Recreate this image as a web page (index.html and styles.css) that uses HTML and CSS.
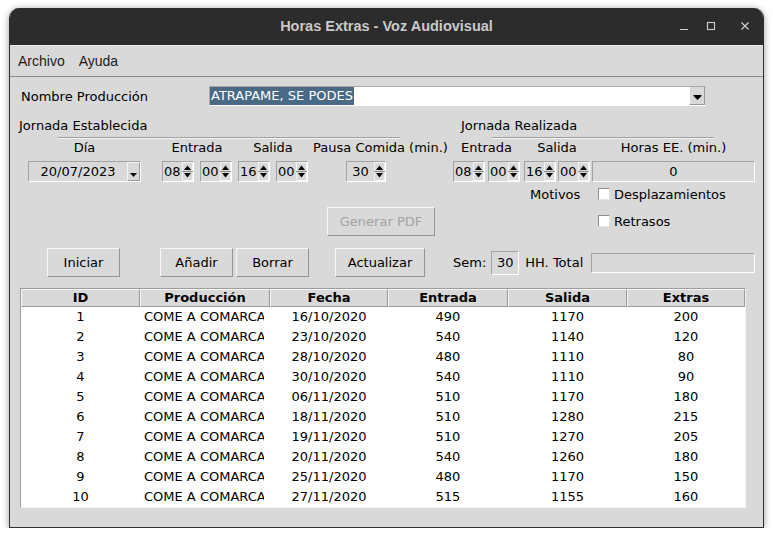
FILE: index.html
```html
<!DOCTYPE html>
<html lang="es">
<head>
<meta charset="utf-8">
<title>Horas Extras - Voz Audiovisual</title>
<link rel="stylesheet" href="styles.css">
</head>
<body>
<div class="window">
  <div class="titlebar">
    <div></div>
    <div class="title">Horas Extras - Voz Audiovisual</div>
    <div class="controls">
      <svg class="ctl ctl-min" width="10" height="10" viewBox="0 0 10 10"><path d="M1 8.5h8" stroke="#cfcfcf" stroke-width="1.2"/></svg>
      <svg class="ctl ctl-max" width="10" height="10" viewBox="0 0 10 10"><rect x="1.5" y="1.5" width="7" height="7" fill="none" stroke="#cfcfcf" stroke-width="1.1"/></svg>
      <svg class="ctl ctl-close" width="10" height="10" viewBox="0 0 10 10"><path d="M1.5 1.5l7 7M8.5 1.5l-7 7" stroke="#cfcfcf" stroke-width="1.2"/></svg>
    </div>
  </div>
  <div class="menubar"><span class="menu-item">Archivo</span><span class="menu-item">Ayuda</span></div>
  <div class="content">
    <div class="row-name">
      <span class="lbl-name">Nombre Producción</span>
      <div class="combo">
        <span class="combo-val"><span class="sel">ATRAPAME, SE PODES</span></span>
        <span class="combo-btn"><svg width="9" height="6" viewBox="0 0 9 6"><path d="M0.5 1h8L4.5 5z" fill="#000"/><path d="M0.5 0.5h8" stroke="#000"/></svg></span>
      </div>
    </div>

    <div class="row-sections">
      <div class="section sec-left"><div class="sec-title">Jornada Establecida</div><div class="sep sep-left"></div></div>
      <div class="section sec-right"><div class="sec-title">Jornada Realizada</div><div class="sep sep-right"></div></div>
    </div>

    <div class="row-fields labels">
      <div class="c c-dia">Día</div>
      <div class="c c-ent">Entrada</div>
      <div class="c c-sal">Salida</div>
      <div class="c c-pau">Pausa Comida (min.)</div>
      <div class="c c-ent2">Entrada</div>
      <div class="c c-sal2">Salida</div>
      <div class="c c-hor">Horas EE. (min.)</div>
    </div>

    <div class="row-fields inputs">
      <div class="c c-dia">
        <div class="date"><span class="date-val">20/07/2023</span><span class="date-btn"><svg width="7" height="4" viewBox="0 0 7 4"><path d="M0 0h7L3.5 4z" fill="#000"/></svg></span></div>
      </div>
      <div class="c c-ent pair">
        <div class="spin"><span class="spin-val">08</span><span class="spin-btns"><svg width="11" height="19" viewBox="0 0 11 19"><path d="M0.5 0.5h10v18h-10z" fill="none" stroke="#f4f4f4"/><path d="M2 8h7L5.5 3.5z" fill="#000"/><path d="M0 9.5h11" stroke="#8a8a8a"/><path d="M2 11h7l-3.5 4.5z" fill="#000"/></svg></span></div>
        <div class="spin"><span class="spin-val">00</span><span class="spin-btns"><svg width="11" height="19" viewBox="0 0 11 19"><path d="M0.5 0.5h10v18h-10z" fill="none" stroke="#f4f4f4"/><path d="M2 8h7L5.5 3.5z" fill="#000"/><path d="M0 9.5h11" stroke="#8a8a8a"/><path d="M2 11h7l-3.5 4.5z" fill="#000"/></svg></span></div>
      </div>
      <div class="c c-sal pair">
        <div class="spin"><span class="spin-val">16</span><span class="spin-btns"><svg width="11" height="19" viewBox="0 0 11 19"><path d="M0.5 0.5h10v18h-10z" fill="none" stroke="#f4f4f4"/><path d="M2 8h7L5.5 3.5z" fill="#000"/><path d="M0 9.5h11" stroke="#8a8a8a"/><path d="M2 11h7l-3.5 4.5z" fill="#000"/></svg></span></div>
        <div class="spin"><span class="spin-val">00</span><span class="spin-btns"><svg width="11" height="19" viewBox="0 0 11 19"><path d="M0.5 0.5h10v18h-10z" fill="none" stroke="#f4f4f4"/><path d="M2 8h7L5.5 3.5z" fill="#000"/><path d="M0 9.5h11" stroke="#8a8a8a"/><path d="M2 11h7l-3.5 4.5z" fill="#000"/></svg></span></div>
      </div>
      <div class="c c-pau">
        <div class="spin spin-wide"><span class="spin-val center">30</span><span class="spin-btns"><svg width="11" height="19" viewBox="0 0 11 19"><path d="M0.5 0.5h10v18h-10z" fill="none" stroke="#f4f4f4"/><path d="M2 8h7L5.5 3.5z" fill="#000"/><path d="M0 9.5h11" stroke="#8a8a8a"/><path d="M2 11h7l-3.5 4.5z" fill="#000"/></svg></span></div>
      </div>
      <div class="c c-ent2 pair">
        <div class="spin"><span class="spin-val">08</span><span class="spin-btns"><svg width="11" height="19" viewBox="0 0 11 19"><path d="M0.5 0.5h10v18h-10z" fill="none" stroke="#f4f4f4"/><path d="M2 8h7L5.5 3.5z" fill="#000"/><path d="M0 9.5h11" stroke="#8a8a8a"/><path d="M2 11h7l-3.5 4.5z" fill="#000"/></svg></span></div>
        <div class="spin"><span class="spin-val">00</span><span class="spin-btns"><svg width="11" height="19" viewBox="0 0 11 19"><path d="M0.5 0.5h10v18h-10z" fill="none" stroke="#f4f4f4"/><path d="M2 8h7L5.5 3.5z" fill="#000"/><path d="M0 9.5h11" stroke="#8a8a8a"/><path d="M2 11h7l-3.5 4.5z" fill="#000"/></svg></span></div>
      </div>
      <div class="c c-sal2 pair">
        <div class="spin"><span class="spin-val">16</span><span class="spin-btns"><svg width="11" height="19" viewBox="0 0 11 19"><path d="M0.5 0.5h10v18h-10z" fill="none" stroke="#f4f4f4"/><path d="M2 8h7L5.5 3.5z" fill="#000"/><path d="M0 9.5h11" stroke="#8a8a8a"/><path d="M2 11h7l-3.5 4.5z" fill="#000"/></svg></span></div>
        <div class="spin"><span class="spin-val">00</span><span class="spin-btns"><svg width="11" height="19" viewBox="0 0 11 19"><path d="M0.5 0.5h10v18h-10z" fill="none" stroke="#f4f4f4"/><path d="M2 8h7L5.5 3.5z" fill="#000"/><path d="M0 9.5h11" stroke="#8a8a8a"/><path d="M2 11h7l-3.5 4.5z" fill="#000"/></svg></span></div>
      </div>
      <div class="c c-hor"><div class="entry entry-hor">0</div></div>
    </div>

    <div class="row-mid">
      <button class="btn btn-pdf" disabled>Generar PDF</button>
      <div class="motivos">
        <span class="mot-lbl">Motivos</span>
        <label class="chk"><span class="box"></span>Desplazamientos</label>
        <span></span>
        <label class="chk"><span class="box"></span>Retrasos</label>
      </div>
    </div>

    <div class="row-buttons">
      <button class="btn btn-iniciar">Iniciar</button>
      <button class="btn btn-anadir">Añadir</button>
      <button class="btn btn-borrar">Borrar</button>
      <button class="btn btn-actualizar">Actualizar</button>
      <span class="sem-lbl">Sem:</span>
      <span class="sem-box">30</span>
      <span class="hh-lbl">HH. Total</span>
      <span class="entry hh-entry"></span>
    </div>

    <div class="table">
      <div class="thead">
        <div class="th">ID</div><div class="th">Producción</div><div class="th">Fecha</div><div class="th">Entrada</div><div class="th">Salida</div><div class="th">Extras</div>
      </div>
      <div class="tr"><div class="td">1</div><div class="td prod"><div class="clip">COME A COMARCA</div></div><div class="td">16/10/2020</div><div class="td">490</div><div class="td">1170</div><div class="td">200</div></div>
      <div class="tr"><div class="td">2</div><div class="td prod"><div class="clip">COME A COMARCA</div></div><div class="td">23/10/2020</div><div class="td">540</div><div class="td">1140</div><div class="td">120</div></div>
      <div class="tr"><div class="td">3</div><div class="td prod"><div class="clip">COME A COMARCA</div></div><div class="td">28/10/2020</div><div class="td">480</div><div class="td">1110</div><div class="td">80</div></div>
      <div class="tr"><div class="td">4</div><div class="td prod"><div class="clip">COME A COMARCA</div></div><div class="td">30/10/2020</div><div class="td">540</div><div class="td">1110</div><div class="td">90</div></div>
      <div class="tr"><div class="td">5</div><div class="td prod"><div class="clip">COME A COMARCA</div></div><div class="td">06/11/2020</div><div class="td">510</div><div class="td">1170</div><div class="td">180</div></div>
      <div class="tr"><div class="td">6</div><div class="td prod"><div class="clip">COME A COMARCA</div></div><div class="td">18/11/2020</div><div class="td">510</div><div class="td">1280</div><div class="td">215</div></div>
      <div class="tr"><div class="td">7</div><div class="td prod"><div class="clip">COME A COMARCA</div></div><div class="td">19/11/2020</div><div class="td">510</div><div class="td">1270</div><div class="td">205</div></div>
      <div class="tr"><div class="td">8</div><div class="td prod"><div class="clip">COME A COMARCA</div></div><div class="td">20/11/2020</div><div class="td">540</div><div class="td">1260</div><div class="td">180</div></div>
      <div class="tr"><div class="td">9</div><div class="td prod"><div class="clip">COME A COMARCA</div></div><div class="td">25/11/2020</div><div class="td">480</div><div class="td">1170</div><div class="td">150</div></div>
      <div class="tr"><div class="td">10</div><div class="td prod"><div class="clip">COME A COMARCA</div></div><div class="td">27/11/2020</div><div class="td">515</div><div class="td">1155</div><div class="td">160</div></div>
    </div>
  </div>
</div>
</body>
</html>
```

FILE: styles.css
```css
* { box-sizing: border-box; }

body {
  margin: 0;
  background: #ffffff;
  font-family: "DejaVu Sans", sans-serif;
  font-size: 13px;
  color: #000;
}

.window {
  margin: 8px 0 0 9px;
  width: 755px;
  height: 520px;
  background: #d9d9d9;
  border: 1px solid #2f2f2f;
  border-top: none;
  border-radius: 10px 10px 0 0;
  box-shadow: 0 1px 7px rgba(0, 0, 0, 0.4);
  display: flex;
  flex-direction: column;
  overflow: hidden;
}

/* title bar */
.titlebar {
  height: 37px;
  flex: none;
  background: #2c2c2c;
  display: grid;
  grid-template-columns: 1fr auto 1fr;
  align-items: center;
}
.title {
  font-family: "Liberation Sans", sans-serif;
  font-weight: bold;
  font-size: 14.5px;
  color: #c9c9c9;
  padding-bottom: 1px;
}
.controls {
  justify-self: end;
  display: flex;
  align-items: center;
  margin-right: 13px;
  padding-bottom: 2px;
}
.ctl { display: block; }
.ctl-max { margin-left: 17px; }
.ctl-close { margin-left: 24px; }

/* menu */
.menubar {
  height: 32px;
  flex: none;
  border-top: 1px solid #ececec;
  border-bottom: 1px solid #8e8e8e;
  display: flex;
  align-items: center;
  padding-left: 8px;
  gap: 14px;
  font-family: "Liberation Sans", sans-serif;
  font-size: 14px;
  color: #1c1c1c;
}

.content {
  flex: 1;
  display: flex;
  flex-direction: column;
}

/* nombre produccion */
.row-name {
  margin-top: 9px;
  height: 20px;
  display: flex;
  align-items: center;
}
.lbl-name {
  margin-left: 11px;
  width: 188px;
}
.combo {
  width: 497px;
  height: 20px;
  display: flex;
  background: #fff;
  border: 1px solid;
  border-color: #a8a8a8 #d9d9d9 #ffffff #a8a8a8;
}
.combo-val {
  flex: 1;
  display: flex;
  align-items: center;
}
.sel {
  background: #4a6984;
  color: #fff;
  line-height: 18px;
  padding: 0 1px;
}
.combo-btn {
  width: 16px;
  background: #d9d9d9;
  border-left: 1px solid #fff;
  border-right: 1px solid #9a9a9a;
  border-bottom: 1px solid #9a9a9a;
  display: flex;
  justify-content: center;
  align-items: flex-end;
  padding-bottom: 3px;
}
.combo-btn svg { display: block; }

/* sections */
.row-sections {
  margin-top: 12px;
  display: flex;
}
.sec-title {
  line-height: 16px;
  height: 16px;
}
.sep {
  margin-top: 3px;
  height: 2px;
  border-top: 1px solid #a0a0a0;
  border-bottom: 1px solid #f4f4f4;
}
.sec-left {
  margin-left: 9px;
  width: 381px;
}
.sep-left { margin-left: 39px; }
.sec-right {
  margin-left: 61px;
  width: 253px;
}
.sep-right { margin-left: 31px; }

/* field rows */
.row-fields {
  display: flex;
  padding-left: 18px;
}
.labels {
  margin-top: 1px;
  line-height: 16px;
  height: 16px;
}
.labels .c { text-align: center; white-space: nowrap; }
.inputs {
  margin-top: 5px;
  height: 21px;
}
.c-dia { width: 113px; }
.c-ent { width: 70px; margin-left: 21px; }
.c-sal { width: 70px; margin-left: 6px; }
.c-pau { width: 135px; margin-left: 5px; }
.c-ent2 { width: 67px; margin-left: 5px; }
.c-sal2 { width: 66px; margin-left: 4px; }
.c-hor { width: 163px; margin-left: 2px; }
.pair {
  display: flex;
  justify-content: space-between;
}
.inputs .c-pau { padding-left: 33px; }

.date {
  height: 21px;
  display: flex;
  border: 1px solid;
  border-color: #a3a3a3 #ffffff #ffffff #a3a3a3;
}
.date-val {
  flex: 1;
  text-align: center;
  line-height: 19px;
}
.date-btn {
  width: 13px;
  border-left: 1px solid #f6f6f6;
  border-top: 1px solid #f6f6f6;
  border-right: 1px solid #9a9a9a;
  border-bottom: 1px solid #9a9a9a;
  display: flex;
  justify-content: center;
  align-items: flex-end;
  padding-bottom: 3px;
}
.date-btn svg { display: block; }

.spin {
  width: 32px;
  height: 21px;
  display: flex;
  border: 1px solid;
  border-color: #a3a3a3 #ffffff #ffffff #a3a3a3;
}
.spin-wide { width: 40px; }
.spin-val {
  flex: 1;
  line-height: 19px;
  padding-left: 1px;
  overflow: hidden;
}
.spin-val.center { text-align: center; padding-left: 0; }
.spin-btns {
  width: 11px;
  display: flex;
}
.spin-btns svg { display: block; }

.entry {
  display: block;
  border: 1px solid;
  border-color: #a3a3a3 #ffffff #ffffff #a3a3a3;
  background: #d9d9d9;
}
.entry-hor {
  height: 21px;
  line-height: 19px;
  text-align: center;
}

/* mid row */
.row-mid {
  margin-top: 2px;
  display: flex;
  height: 52px;
}
.btn {
  font-family: "DejaVu Sans", sans-serif;
  font-size: 13px;
  color: #000;
  height: 29px;
  background: #d9d9d9;
  border: 1px solid;
  border-color: #f8f8f8 #949494 #949494 #f8f8f8;
  padding: 0;
  margin: 0;
}
.btn-pdf {
  margin-left: 317px;
  margin-top: 23px;
  width: 108px;
  color: #a3a3a3;
}
.motivos {
  margin-left: 95px;
  display: grid;
  grid-template-columns: 68px auto;
  grid-auto-rows: 20px;
  row-gap: 7px;
  align-items: center;
}
.chk {
  display: flex;
  align-items: center;
  gap: 4px;
}
.box {
  width: 12px;
  height: 12px;
  background: #fff;
  border: 1px solid;
  border-color: #8e8e8e #e6e6e6 #e6e6e6 #8e8e8e;
}

/* buttons row */
.row-buttons {
  margin-top: 12px;
  display: flex;
  align-items: center;
  height: 29px;
}
.btn-iniciar { margin-left: 37px; width: 73px; }
.btn-anadir { margin-left: 40px; width: 73px; }
.btn-borrar { margin-left: 3px; width: 73px; }
.btn-actualizar { margin-left: 26px; width: 90px; }
.sem-lbl { margin-left: 28px; }
.sem-box {
  margin-left: 5px;
  width: 28px;
  height: 24px;
  line-height: 22px;
  text-align: center;
  border: 1px solid;
  border-color: #a3a3a3 #ffffff #ffffff #a3a3a3;
}
.hh-lbl { margin-left: 6px; }
.hh-entry {
  margin-left: auto;
  margin-right: 8px;
  width: 164px;
  height: 20px;
}

/* table */
.table {
  margin: 11px 0 0 10px;
  width: 726px;
  height: 220px;
  background: #fff;
  border: 1px solid;
  border-color: #9d9d9d #f4f4f4 #f4f4f4 #9d9d9d;
}
.thead, .tr {
  display: grid;
  grid-template-columns: 119px 130px 118px 120px 119px 118px;
}
.th {
  height: 18px;
  line-height: 16px;
  background: #d9d9d9;
  font-weight: bold;
  text-align: center;
  border: 1px solid;
  border-color: #f6f6f6 #9a9a9a #9a9a9a #f6f6f6;
}
.td {
  height: 20px;
  line-height: 20px;
  text-align: center;
  white-space: nowrap;
}
.td.prod {
  text-align: left;
  padding-left: 4px;
}
.clip {
  width: 120px;
  overflow: hidden;
}
```
